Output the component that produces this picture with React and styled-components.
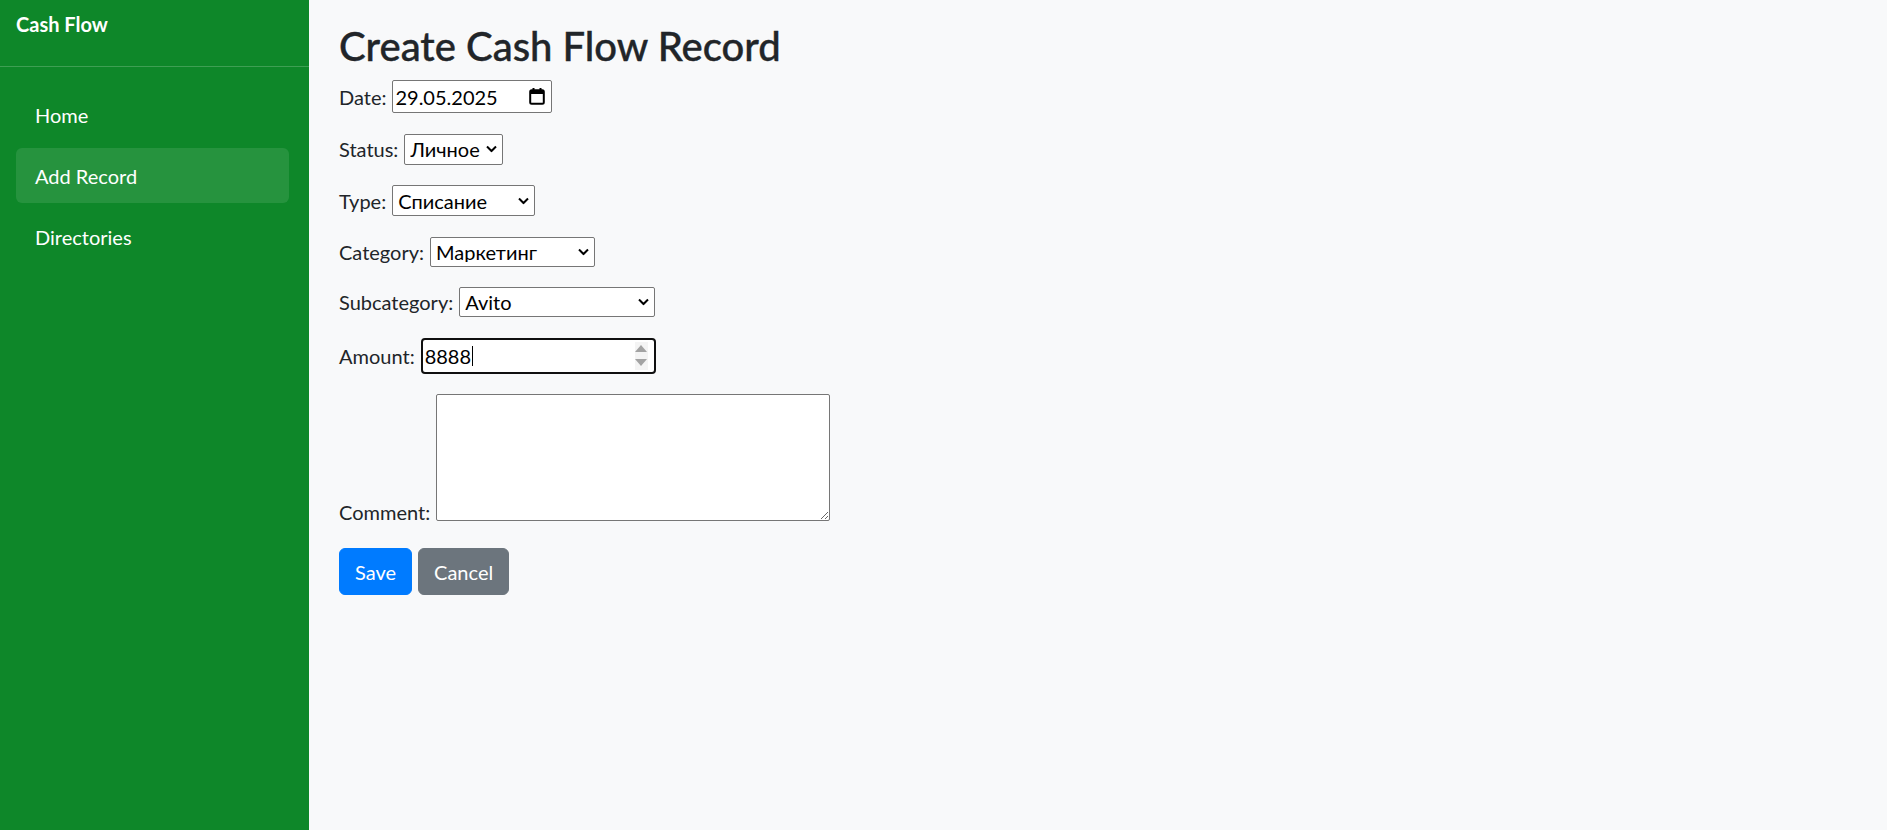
import React from "react";
import styled, { createGlobalStyle } from "styled-components";

const GlobalStyle = createGlobalStyle`
  html, body {
    margin: 0;
    padding: 0;
  }
  body {
    font-family: Lato, "Noto Sans", sans-serif;
    font-size: 20px;
    line-height: 1.5;
    color: #212529;
    background: #f8f9fa;
  }
  * { box-sizing: border-box; }
`;

const Layout = styled.div`
  display: flex;
  min-height: 830px;
`;

const Sidebar = styled.aside`
  width: 309px;
  flex-shrink: 0;
  background: #0e8729;
  color: #fff;
`;

const Brand = styled.div`
  height: 67px;
  padding: 9px 16px 0;
  font-weight: 700;
  font-size: 20px;
  border-bottom: 1px solid rgba(255, 255, 255, 0.2);
`;

const Nav = styled.nav`
  display: flex;
  flex-direction: column;
  gap: 6px;
  padding: 20px 20px 20px 16px;
`;

const NavItem = styled.a`
  display: flex;
  align-items: center;
  height: 55px;
  padding: 0 19px;
  border-radius: 6px;
  color: #fff;
  text-decoration: none;
  font-size: 20px;
  background: ${(p) => (p.$active ? "rgba(255,255,255,0.1)" : "transparent")};
`;

const Main = styled.main`
  flex: 1;
  padding: 22px 30px;
`;

const Title = styled.h1`
  margin: 0 0 10px;
  font-size: 40px;
  font-weight: 500;
  line-height: 1.2;
  color: #212529;
  -webkit-text-stroke: 0.4px #212529;
`;

const Row = styled.div`
  display: flex;
  align-items: ${(p) => p.$align || "center"};
  gap: 6px;
  margin-bottom: ${(p) => p.$mb || "20.5px"};
`;

const Label = styled.label`
  font-size: 20px;
  color: #212529;
  margin-bottom: ${(p) => p.$shift || "0"};
`;

const Field = styled.div`
  display: flex;
  align-items: center;
  width: ${(p) => p.$w}px;
  height: ${(p) => p.$h}px;
  background: #fff;
  border: 1px solid #767676;
  border-radius: 2px;
  padding: 0 6px 0 2px;
`;

const PlainInput = styled.input`
  flex: 1;
  min-width: 0;
  border: none;
  outline: none;
  background: transparent;
  padding: 0;
  font: inherit;
  font-size: 20px;
  color: #000;
`;

const SelectWrap = styled.div`
  position: relative;
  display: inline-block;
`;

const Select = styled.select`
  appearance: none;
  -webkit-appearance: none;
  width: ${(p) => p.$w}px;
  height: ${(p) => p.$h}px;
  padding: 0 17px 0 5px;
  border: 1px solid #767676;
  border-radius: 2px;
  background: #fff;
  font: inherit;
  font-size: 20px;
  line-height: 1;
  color: #000;
`;

const Chevron = styled.svg`
  position: absolute;
  right: 6px;
  top: 50%;
  transform: translateY(-50%);
  pointer-events: none;
`;

const AmountBox = styled.div`
  display: flex;
  align-items: center;
  width: 235px;
  height: 36px;
  background: #fff;
  border: 2px solid #101010;
  border-radius: 4px;
  padding: 0 6px 0 2px;
  color: #000;
  font-size: 20px;
`;

const AmountText = styled.span`
  line-height: 1;
`;

const Caret = styled.span`
  display: inline-block;
  width: 1px;
  height: 20px;
  background: #000;
  margin-left: 1px;
`;

const Spinner = styled.div`
  margin-left: auto;
  width: 13px;
  height: 28px;
  background: #f4f4f4;
  display: flex;
  flex-direction: column;
  align-items: center;
  justify-content: center;
  gap: 7px;
`;

const TextArea = styled.textarea`
  width: 394px;
  height: 127px;
  border: 1px solid #767676;
  border-radius: 2px;
  background: #fff;
  font: inherit;
  font-size: 20px;
  display: block;
`;

const Buttons = styled.div`
  display: flex;
  gap: 6px;
`;

const Button = styled.button`
  font: inherit;
  font-size: 20px;
  line-height: 30px;
  padding: 7.5px 15px;
  color: #fff;
  background: ${(p) => p.$bg};
  border: 1px solid ${(p) => p.$bg};
  border-radius: 6px;
  cursor: pointer;
`;

const ChevronIcon = () => (
  <Chevron width="11" height="7" viewBox="0 0 11 7">
    <path d="M1 1 L5.5 5.5 L10 1" fill="none" stroke="#000" strokeWidth="2" />
  </Chevron>
);

const CalendarIcon = () => (
  <svg width="16" height="17" viewBox="0 0 16 17">
    <rect x="1.2" y="2.2" width="13.6" height="13.6" rx="1.5" fill="none" stroke="#000" strokeWidth="2" />
    <rect x="1" y="2" width="14" height="4" fill="#000" />
    <rect x="3.5" y="0" width="2" height="3" fill="#000" />
    <rect x="10.5" y="0" width="2" height="3" fill="#000" />
  </svg>
);

const SelectField = ({ w, h, value, options }) => (
  <SelectWrap>
    <Select $w={w} $h={h} defaultValue={value}>
      {options.map((o) => (
        <option key={o}>{o}</option>
      ))}
    </Select>
    <ChevronIcon />
  </SelectWrap>
);

export default function App() {
  return (
    <>
      <GlobalStyle />
      <Layout>
        <Sidebar>
          <Brand>Cash Flow</Brand>
          <Nav>
            <NavItem href="#">Home</NavItem>
            <NavItem href="#" $active>Add Record</NavItem>
            <NavItem href="#">Directories</NavItem>
          </Nav>
        </Sidebar>
        <Main>
          <Title>Create Cash Flow Record</Title>
          <form onSubmit={(e) => e.preventDefault()}>
            <Row>
              <Label>Date:</Label>
              <Field $w={160} $h={33}>
                <PlainInput defaultValue="29.05.2025" />
                <CalendarIcon />
              </Field>
            </Row>
            <Row>
              <Label>Status:</Label>
              <SelectField w={99} h={31} value="Личное" options={["Личное", "Бизнес"]} />
            </Row>
            <Row>
              <Label>Type:</Label>
              <SelectField w={143} h={31} value="Списание" options={["Списание", "Пополнение"]} />
            </Row>
            <Row>
              <Label>Category:</Label>
              <SelectField w={165} h={30} value="Маркетинг" options={["Маркетинг", "Инфраструктура"]} />
            </Row>
            <Row>
              <Label>Subcategory:</Label>
              <SelectField w={196} h={30} value="Avito" options={["Avito", "Farpost"]} />
            </Row>
            <Row>
              <Label>Amount:</Label>
              <AmountBox>
                <AmountText>8888</AmountText>
                <Caret />
                <Spinner>
                  <svg width="12" height="7" viewBox="0 0 12 7">
                    <path d="M6 0 L12 7 L0 7 Z" fill="#a3a3a3" />
                  </svg>
                  <svg width="12" height="7" viewBox="0 0 12 7">
                    <path d="M0 0 L12 0 L6 7 Z" fill="#a3a3a3" />
                  </svg>
                </Spinner>
              </AmountBox>
            </Row>
            <Row $align="flex-end" $mb="27px">
              <Label $shift="-6px">Comment:</Label>
              <TextArea />
            </Row>
            <Buttons>
              <Button type="submit" $bg="#007bff">Save</Button>
              <Button type="button" $bg="#6c757d">Cancel</Button>
            </Buttons>
          </form>
        </Main>
      </Layout>
    </>
  );
}
